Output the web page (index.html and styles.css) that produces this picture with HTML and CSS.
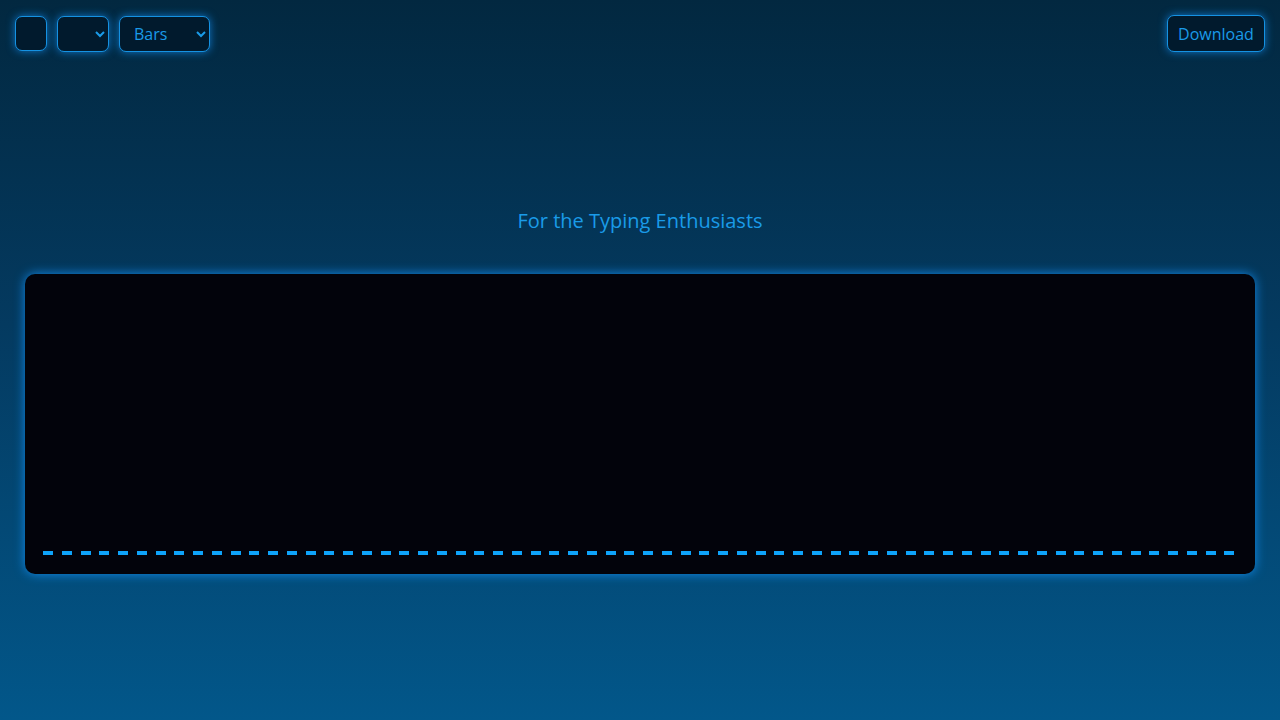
FILE: index.html
```html
<!DOCTYPE html>
<html lang="en">
<head>
    <meta charset="UTF-8">
    <meta name="viewport" content="width=device-width, initial-scale=1.0">
    <title>Typing Visualizer</title>
    <link rel="stylesheet" href="styles.css">
</head>
<body>
    <div class="topbar">
        <div class="controls">
            <button class="btn btn_empty"></button>
            <select class="sel sel_small">
                <option></option>
            </select>
            <select class="sel sel_mode">
                <option>Bars</option>
                <option>Wave</option>
            </select>
        </div>
        <button class="btn btn_download">Download</button>
    </div>

    <div class="title">For the Typing Enthusiasts</div>

    <div class="card">
        <div class="bars"></div>
    </div>

<script>
    var bars = document.querySelector('.bars')
    for (var i = 0; i < 64; i++) {
        bars.innerHTML += '<div class="bar"><span></span></div>'
    }
</script>
</body>
</html>
```

FILE: styles.css
```css
*{
    box-sizing: border-box;
}

body{
    margin: 0;
    height: 100vh;
    background: linear-gradient(to bottom, #022840 0%, #043a60 45%, #02578a 100%);
    font-family: "Open Sans", "Noto Sans", sans-serif;
    color: #1a9be8;
}

.topbar{
    display: flex;
    justify-content: space-between;
    align-items: flex-start;
    padding: 15px 15px 0 15px;
}

.controls{
    display: flex;
    gap: 10px;
    padding-top: 1px;
}

.btn,
.sel{
    height: 36px;
    background-color: #011a2d;
    color: #1a9be8;
    border: 1px solid #1592e2;
    border-radius: 7px;
    box-shadow: 0 0 9px rgba(20, 150, 255, 0.7);
    font-family: "Open Sans", "Noto Sans", sans-serif;
    font-size: 16px;
}

.btn_empty{
    width: 32px;
    height: 35px;
}

.sel{
    padding: 0 4px 0 10px;
}

.sel_small{
    width: 52px;
}

.sel_mode{
    width: 91px;
}

.btn_download{
    width: 98px;
    height: 37px;
    padding: 0;
}

.title{
    text-align: center;
    font-size: 20px;
    margin-top: 155px;
    line-height: 28px;
}

.card{
    margin: 39px 25px 0 25px;
    height: 300px;
    background-color: #02030b;
    border-radius: 10px;
    box-shadow: 0 0 11px rgba(20, 150, 255, 0.85);
    padding: 277px 12px 0 18px;
}

.bars{
    display: flex;
}

.bar{
    flex: 1;
}

.bar span{
    display: block;
    width: 10px;
    height: 4px;
    background-color: #0ea3fa;
}
```
